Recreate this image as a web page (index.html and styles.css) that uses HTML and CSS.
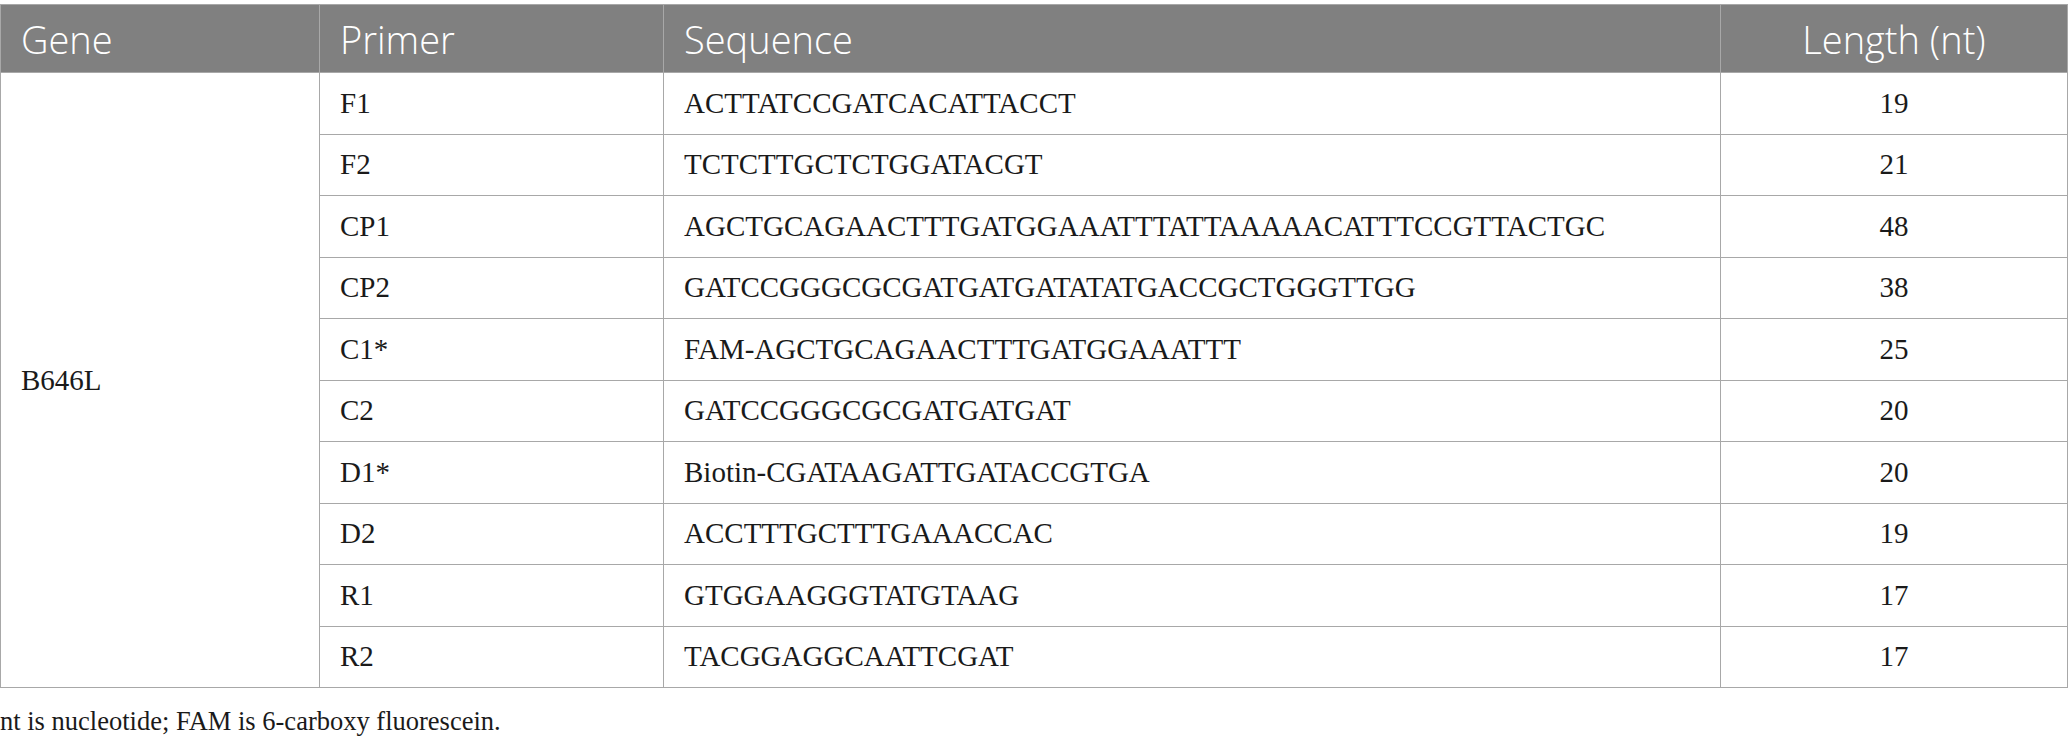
FILE: index.html
```html
<!DOCTYPE html>
<html>
<head>
<meta charset="utf-8">
<link rel="stylesheet" href="styles.css">
</head>
<body>
<div class="wrap">
<table class="tbl">
<colgroup>
<col class="c1"><col class="c2"><col class="c3"><col class="c4">
</colgroup>
<thead>
<tr><th>Gene</th><th>Primer</th><th>Sequence</th><th class="ctr">Length (nt)</th></tr>
</thead>
<tbody>
<tr><td rowspan="10">B646L</td><td>F1</td><td>ACTTATCCGATCACATTACCT</td><td class="ctr">19</td></tr>
<tr><td>F2</td><td>TCTCTTGCTCTGGATACGT</td><td class="ctr">21</td></tr>
<tr><td>CP1</td><td>AGCTGCAGAACTTTGATGGAAATTTATTAAAAACATTTCCGTTACTGC</td><td class="ctr">48</td></tr>
<tr><td>CP2</td><td>GATCCGGGCGCGATGATGATATATGACCGCTGGGTTGG</td><td class="ctr">38</td></tr>
<tr><td>C1*</td><td>FAM-AGCTGCAGAACTTTGATGGAAATTT</td><td class="ctr">25</td></tr>
<tr><td>C2</td><td>GATCCGGGCGCGATGATGAT</td><td class="ctr">20</td></tr>
<tr><td>D1*</td><td>Biotin-CGATAAGATTGATACCGTGA</td><td class="ctr">20</td></tr>
<tr><td>D2</td><td>ACCTTTGCTTTGAAACCAC</td><td class="ctr">19</td></tr>
<tr><td>R1</td><td>GTGGAAGGGTATGTAAG</td><td class="ctr">17</td></tr>
<tr><td>R2</td><td>TACGGAGGCAATTCGAT</td><td class="ctr">17</td></tr>
</tbody>
</table>
<p class="note">nt is nucleotide; FAM is 6-carboxy fluorescein.</p>
</div>
</body>
</html>
```
FILE: styles.css
```css
html, body {
  margin: 0;
  padding: 0;
  background: #ffffff;
}
.wrap {
  padding-top: 4px;
}
.tbl {
  border-collapse: collapse;
  width: 2067px;
  table-layout: fixed;
  font-family: "Liberation Serif", "Times New Roman", serif;
  font-size: 29px;
  color: #1a1a1a;
}
.c1 { width: 319px; }
.c2 { width: 344px; }
.c3 { width: 1057px; }
.c4 { width: 347px; }
.tbl th {
  background: #808080;
  color: #ffffff;
  font-family: "Open Sans", "Noto Sans", sans-serif;
  font-weight: 300;
  font-size: 38px;
  text-align: left;
  height: 68px;
  padding: 0 20px;
  border: 1px solid #a8a8a8;
  box-sizing: border-box;
}
.tbl td {
  height: 61.5px;
  padding: 0 20px;
  border: 1px solid #a8a8a8;
  vertical-align: middle;
  box-sizing: border-box;
  white-space: nowrap;
}
.tbl .ctr {
  text-align: center;
}
.note {
  margin: 0;
  padding-top: 18px;
  font-family: "Liberation Serif", "Times New Roman", serif;
  font-size: 26.5px;
  color: #1a1a1a;
}
```
